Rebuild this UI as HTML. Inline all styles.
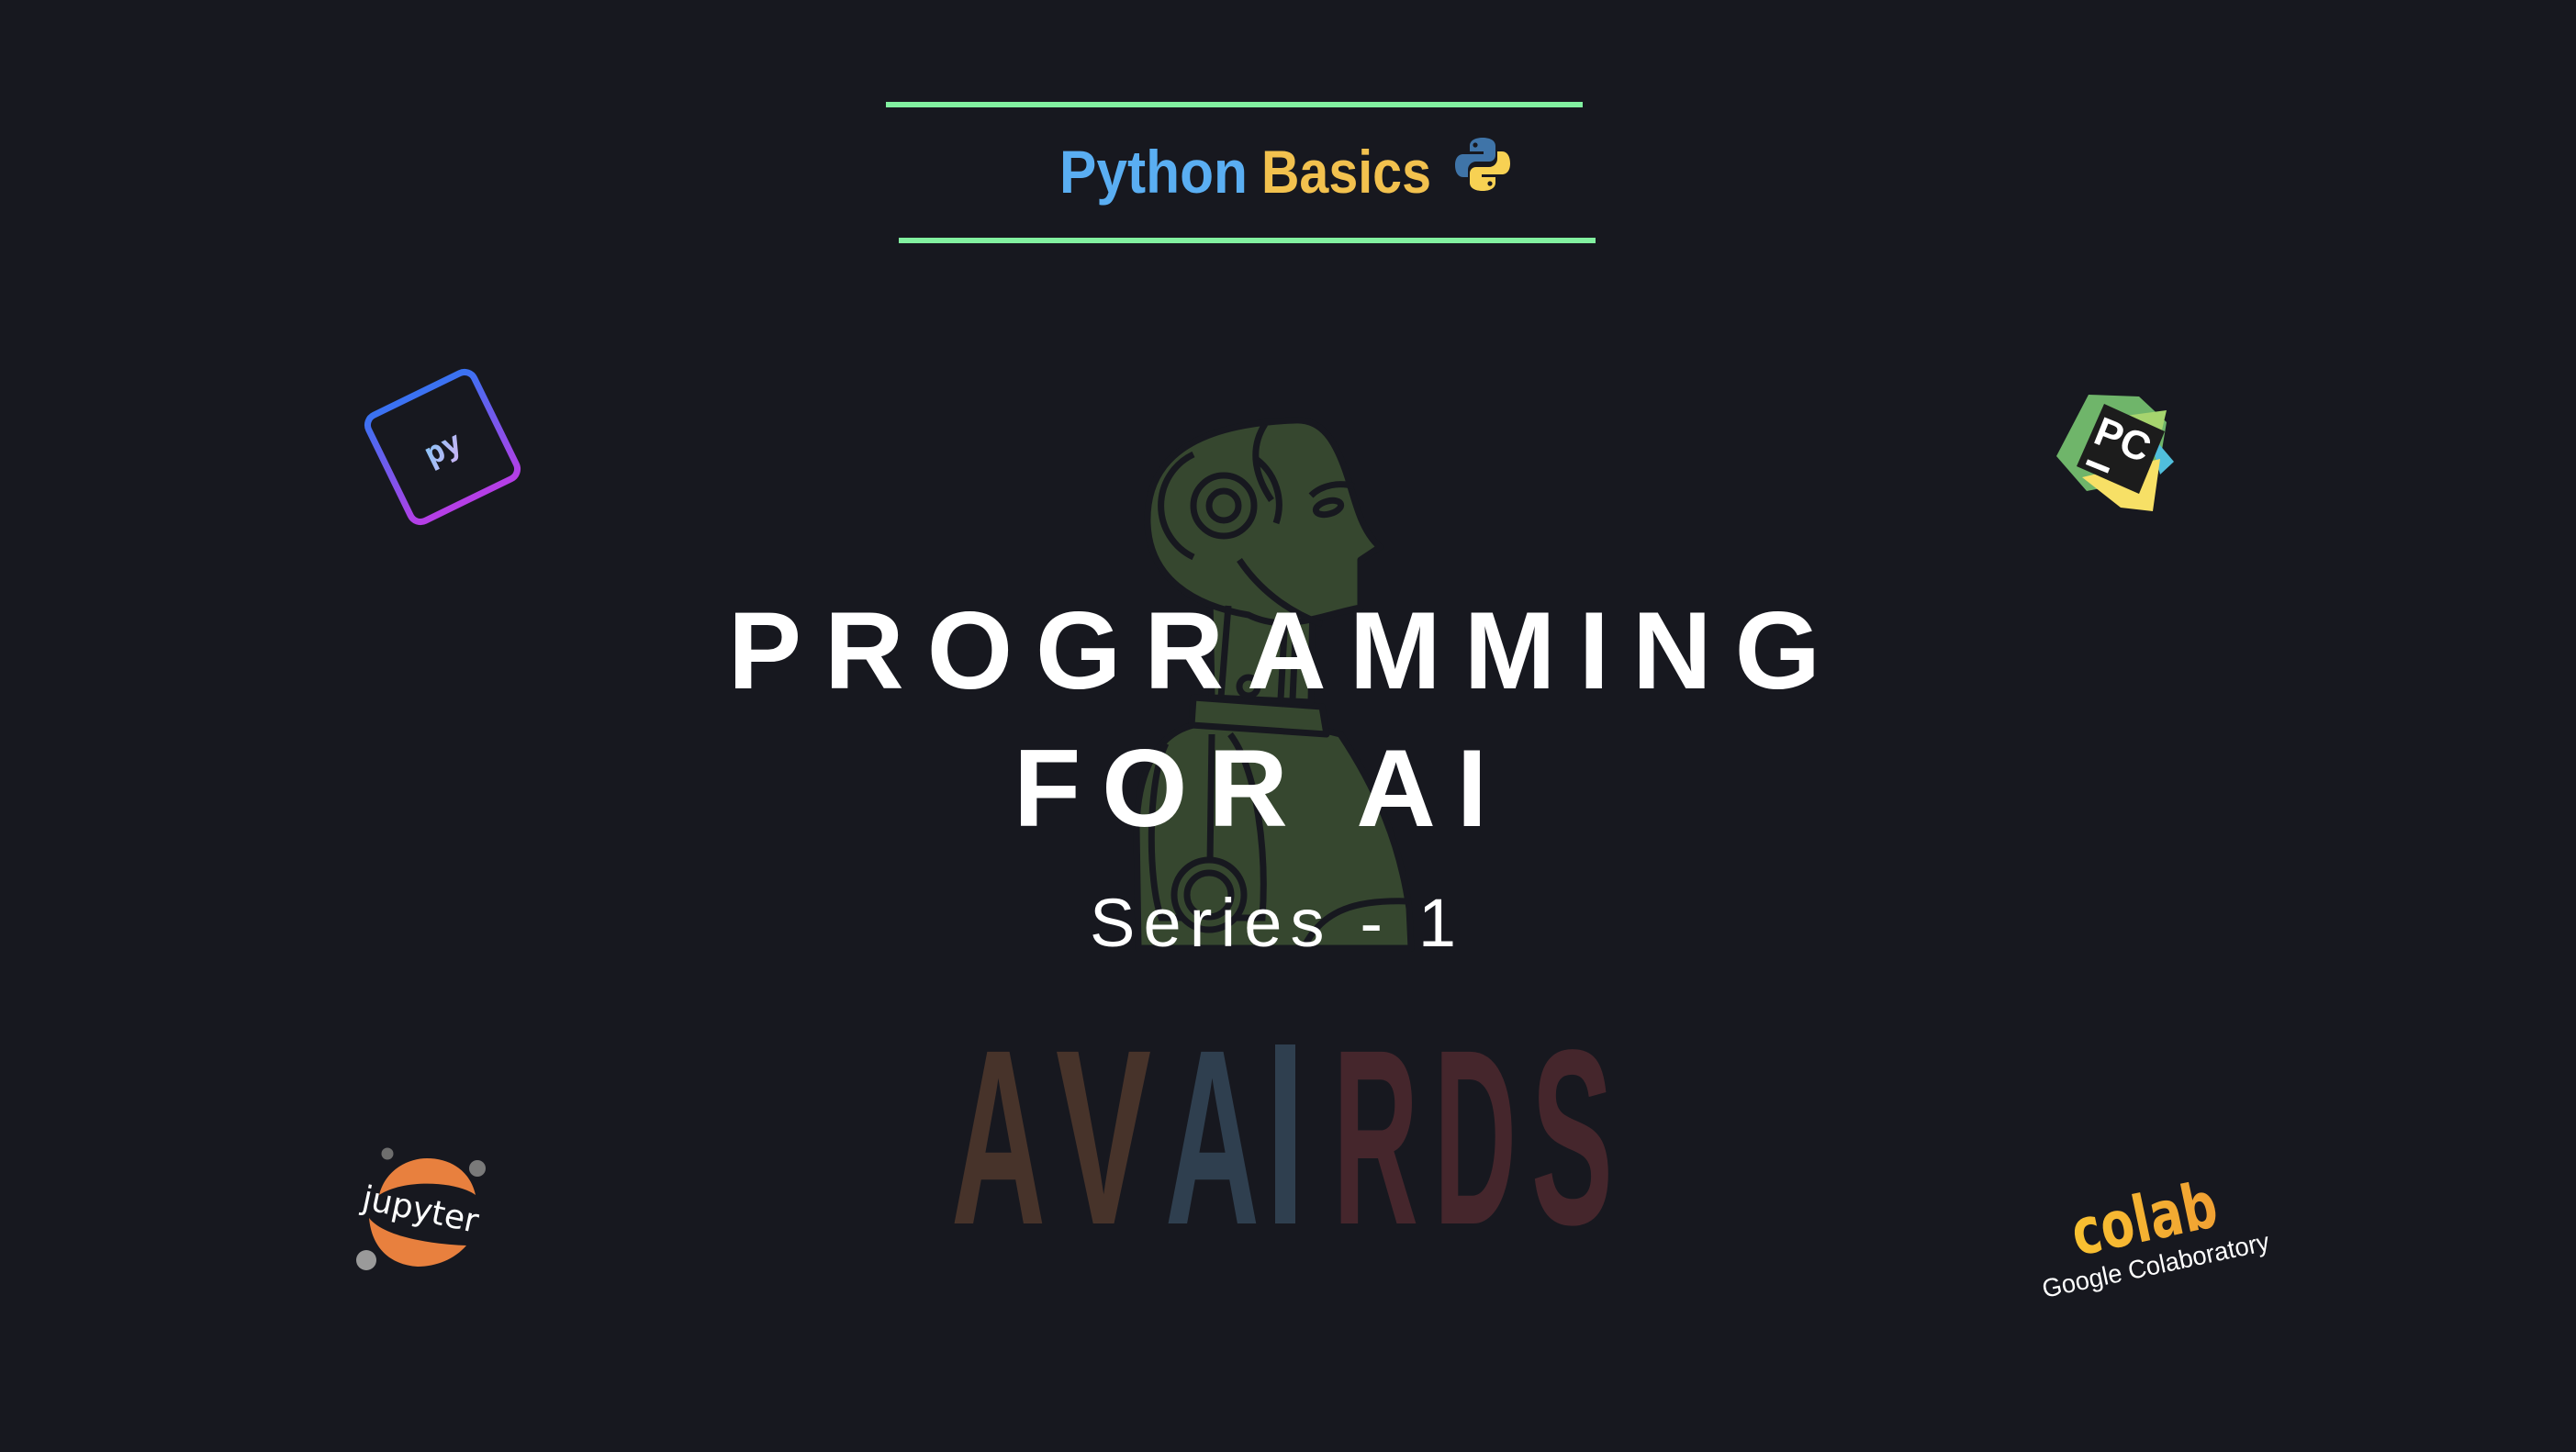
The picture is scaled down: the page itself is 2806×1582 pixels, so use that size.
<!DOCTYPE html>
<html><head><meta charset="utf-8"><style>
html,body{margin:0;padding:0;background:#17181f;}
svg{display:block}
</style></head><body>
<svg width="2806" height="1582" viewBox="0 0 2806 1582" xmlns="http://www.w3.org/2000/svg">
<defs>
<linearGradient id="pyg" x1="0" y1="0" x2="0" y2="1"><stop offset="0" stop-color="#3a72f2"/><stop offset="1" stop-color="#b53ee6"/></linearGradient>
<linearGradient id="pyt" x1="0" y1="0" x2="1" y2="1"><stop offset="0" stop-color="#7cc8f8"/><stop offset="1" stop-color="#d8b0f4"/></linearGradient>
<linearGradient id="col" x1="0" y1="0" x2="1" y2="0"><stop offset="0" stop-color="#f9c231"/><stop offset="1" stop-color="#f0a033"/></linearGradient>
</defs>
<rect width="2806" height="1582" fill="#17181f"/>

<!-- header lines -->
<rect x="965" y="111" width="759" height="6" fill="#82f0a0"/>
<rect x="979" y="259" width="759" height="6" fill="#82f0a0"/>
<text x="1154" y="210" font-family="Liberation Sans" font-weight="bold" font-size="66" fill="#5aaef2" textLength="205" lengthAdjust="spacingAndGlyphs">Python</text>
<text x="1374" y="210" font-family="Liberation Sans" font-weight="bold" font-size="66" fill="#f2c14e" textLength="185" lengthAdjust="spacingAndGlyphs">Basics</text>
<g transform="translate(1585,150)">
<path d="M30,0 C22,0 16,3 16,9 L16,15 L31,15 L31,18 L9,18 C3,18 0,23 0,30 C0,37 3,43 9,43 L14,43 L14,35 C14,30 18,26 23,26 L37,26 C41,26 44,23 44,19 L44,9 C44,3 38,0 30,0 Z" fill="#3f74a8"/>
<circle cx="22" cy="8" r="2.6" fill="#17181f"/>
<g transform="rotate(180 30 29)">
<path d="M30,0 C22,0 16,3 16,9 L16,15 L31,15 L31,18 L9,18 C3,18 0,23 0,30 C0,37 3,43 9,43 L14,43 L14,35 C14,30 18,26 23,26 L37,26 C41,26 44,23 44,19 L44,9 C44,3 38,0 30,0 Z" fill="#f7d153"/>
<circle cx="22" cy="8" r="2.6" fill="#17181f"/>
</g>
</g>

<!-- robot -->
<g fill="#36472f" stroke="#17181f" stroke-width="7" stroke-linejoin="round">
<path d="M1240,1033 L1238,900 C1240,840 1260,800 1300,790 L1420,790 L1460,800 C1500,860 1525,920 1535,990 L1537,1033 Z"/>
<path d="M1300,760 L1440,770 L1445,800 L1298,790 Z"/>
<path d="M1318,650 L1430,650 L1428,765 L1320,760 Z"/>
<path d="M1410,458 C1440,456 1455,480 1468,520 C1478,555 1485,580 1503,596 L1482,610 L1482,662 C1440,670 1400,690 1360,670 C1300,660 1252,630 1250,570 C1248,500 1300,462 1410,458 Z"/>
</g>
<g fill="none" stroke="#17181f" stroke-width="7">
<circle cx="1333" cy="551" r="16"/>
<circle cx="1333" cy="551" r="33"/>
<path d="M1300,495 A62 62 0 0 0 1300,607"/>
<path d="M1368,500 A62 62 0 0 1 1390,570"/>
<path d="M1378,462 C1360,490 1368,520 1385,545"/>
<path d="M1350,610 C1370,640 1400,665 1440,680"/>
<path d="M1338,660 L1330,760 M1400,670 L1395,762 M1412,672 L1408,762"/>
<circle cx="1360" cy="748" r="10"/>
<path d="M1270,810 C1250,850 1250,960 1265,1000 L1290,1000 M1320,800 L1318,940 M1345,1000 L1375,1000 C1380,930 1370,840 1340,800"/>
<circle cx="1317" cy="975" r="38"/>
<circle cx="1317" cy="975" r="24"/>
<path d="M1420,1033 C1440,990 1480,980 1535,982"/>
<ellipse cx="1447" cy="553" rx="14" ry="7" transform="rotate(-15 1447 553)"/>
<path d="M1428,540 C1440,528 1460,525 1475,530"/>
</g>

<!-- main titles -->
<text x="793" y="750" font-family="Liberation Sans" font-weight="bold" font-size="120" fill="#ffffff" textLength="1190" lengthAdjust="spacing">PROGRAMMING</text>
<text x="1104" y="900" font-family="Liberation Sans" font-weight="bold" font-size="120" fill="#ffffff" textLength="516" lengthAdjust="spacing">FOR AI</text>
<text x="1187" y="1031" font-family="Liberation Sans" font-size="74" fill="#ffffff" textLength="399" lengthAdjust="spacing">Series - 1</text>

<!-- AVAIRDS -->
<g font-family="Liberation Sans" font-weight="bold" font-size="272">
<text x="1036" y="1333" fill="#47332a" textLength="103" lengthAdjust="spacingAndGlyphs">A</text>
<text x="1150" y="1333" fill="#47332a" textLength="104" lengthAdjust="spacingAndGlyphs">V</text>
<text x="1269" y="1333" fill="#2f3f4f" textLength="103" lengthAdjust="spacingAndGlyphs">A</text>
<rect x="1389" y="1138" width="22" height="195" fill="#2f3f4f"/>
<text x="1452" y="1333" fill="#45262c" textLength="93" lengthAdjust="spacingAndGlyphs">R</text>
<text x="1562" y="1333" fill="#45262c" textLength="90" lengthAdjust="spacingAndGlyphs">D</text>
<text x="1668" y="1333" fill="#45262c" textLength="89" lengthAdjust="spacingAndGlyphs">S</text>
</g>

<!-- py icon -->
<g transform="rotate(-26 482 487)">
<rect x="418" y="423" width="128" height="128" rx="12" fill="none" stroke="url(#pyg)" stroke-width="7"/>
<text x="482" y="500" text-anchor="middle" font-family="DejaVu Sans Mono" font-weight="bold" font-size="34" fill="url(#pyt)">py</text>
</g>

<!-- pycharm -->
<polygon points="2275,430 2330,432 2360,460 2350,520 2273,535 2240,497" fill="#6fb56a"/>
<polygon points="2300,455 2360,447 2350,490" fill="#a6d46e"/>
<polygon points="2340,470 2368,503 2353,517" fill="#50bedc"/>
<polygon points="2268,520 2353,500 2345,557 2310,553" fill="#f7e066"/>
<polygon points="2292,440 2358,470 2330,538 2262,508" fill="#1c1c1c"/>
<text x="2312" y="494" text-anchor="middle" font-family="Liberation Sans" font-weight="bold" font-size="44" fill="#ffffff" transform="rotate(22 2312 480)">PC</text>
<rect x="2272" y="505" width="26" height="6" fill="#ffffff" transform="rotate(22 2285 508)"/>

<!-- jupyter -->
<circle cx="422" cy="1257" r="6.5" fill="#6e6e6e"/>
<circle cx="520" cy="1273" r="9" fill="#7a7a7a"/>
<circle cx="399" cy="1373" r="11" fill="#9a9a9a"/>
<path d="M413,1302 C420,1274 445,1262 465,1262 C490,1262 512,1275 518,1302 C498,1287 440,1284 413,1302 Z" fill="#e8803e"/>
<path d="M402,1327 C420,1350 480,1356 508,1357 C495,1372 475,1380 455,1380 C425,1378 405,1360 402,1327 Z" fill="#e8803e"/>
<text x="458" y="1330" text-anchor="middle" font-family="DejaVu Sans" font-size="36" fill="#ffffff" transform="rotate(12 458 1318)">jupyter</text>

<!-- colab -->
<text x="2336" y="1352" text-anchor="middle" font-family="DejaVu Sans" font-weight="bold" font-size="70" fill="url(#col)" transform="rotate(-12 2336 1330)" textLength="160" lengthAdjust="spacingAndGlyphs">colab</text>
<text x="2348" y="1388" text-anchor="middle" font-family="Liberation Sans" font-size="28" fill="#ffffff" transform="rotate(-12 2348 1378)" textLength="252" lengthAdjust="spacingAndGlyphs">Google Colaboratory</text>
</svg>
</body></html>
